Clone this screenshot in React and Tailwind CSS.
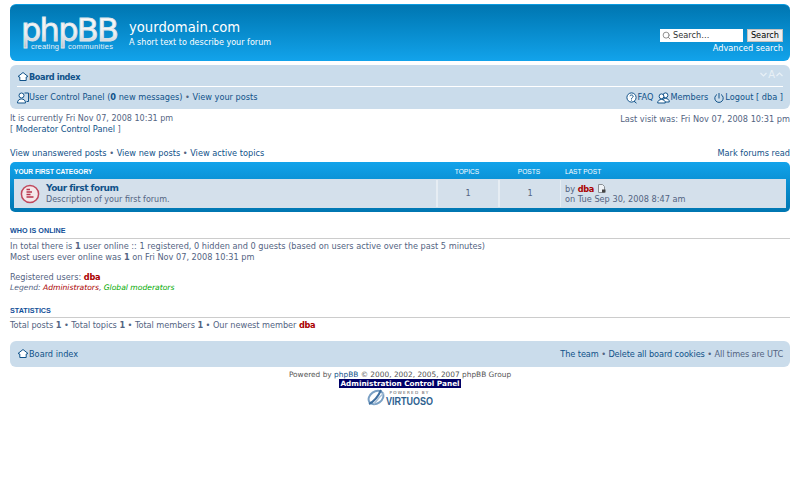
import { Search } from "lucide-react";

const HomeIcon = () => (
  <svg width="12" height="12" viewBox="0 0 12 12" fill="none" stroke="#105289" strokeWidth="1" className="shrink-0">
    <path d="M6 1.5 L11 5.5 L9.2 6 L9.2 9.5 L2.8 9.5 L2.8 6 L1 5.5 Z" fill="#fff" />
  </svg>
);

const UcpIcon = () => (
  <svg width="12" height="12" viewBox="0 0 12 12" fill="none" stroke="#105289" strokeWidth="1" className="shrink-0">
    <circle cx="4.5" cy="3.5" r="2.5" fill="#fff" />
    <path d="M0.5 11 C0.5 8 2.5 7 4.5 7 C6.5 7 8.5 8 8.5 11 Z" fill="#fff" />
    <path d="M7.5 1 H11.5 V9.5 H9.5" />
  </svg>
);

const FaqIcon = () => (
  <svg width="11" height="12" viewBox="0 0 11 12" fill="none" stroke="#105289" strokeWidth="1" className="shrink-0">
    <circle cx="5.5" cy="5.5" r="4.6" fill="#fff" />
    <path d="M3.9 4.2 C3.9 2.6 7.2 2.6 7.2 4.3 C7.2 5.5 5.5 5.4 5.5 6.8" />
    <path d="M5.5 7.6 V8.6" />
    <path d="M8 9.2 L10.5 11.2" />
  </svg>
);

const MembersIcon = () => (
  <svg width="13" height="12" viewBox="0 0 13 12" fill="none" stroke="#105289" strokeWidth="1" className="shrink-0">
    <circle cx="8.5" cy="3.3" r="2.4" fill="#fff" />
    <path d="M5 10 C5 7.5 6.5 6.5 8.5 6.5 C10.5 6.5 12.3 7.5 12.3 10 Z" fill="#fff" />
    <circle cx="4.5" cy="4.3" r="2.4" fill="#fff" />
    <path d="M0.7 11 C0.7 8.5 2.5 7.5 4.5 7.5 C6.5 7.5 8.3 8.5 8.3 11 Z" fill="#fff" />
  </svg>
);

const LogoutIcon = () => (
  <svg width="10" height="12" viewBox="0 0 10 12" fill="none" stroke="#105289" strokeWidth="1" className="shrink-0">
    <path d="M3 2.5 A4.2 4.2 0 1 0 7 2.5" />
    <path d="M5 1 V6.5" />
  </svg>
);

const ForumIcon = () => (
  <svg width="20" height="20" viewBox="0 0 20 20" className="shrink-0">
    <circle cx="10" cy="10" r="8.6" fill="#f5e8ea" stroke="#c0485c" strokeWidth="1.5" />
    <path d="M6.5 5.5 H10 M6.5 8 H12 M6.5 10.5 H10.5 M6.5 13 H13.5" stroke="#b8354c" strokeWidth="1.3" />
  </svg>
);

const PostIcon = () => (
  <svg width="9" height="9" viewBox="0 0 9 9" className="inline-block align-[-1px]">
    <path d="M1.5 0.5 H5.5 L7.5 2.5 V8.5 H1.5 Z" fill="#eef2f6" stroke="#8a8f94" strokeWidth="1" />
    <path d="M5 5.5 H8.5 V8.5 H5 Z" fill="#444" />
  </svg>
);

const VirtuosoLogo = () => (
  <svg width="18" height="17" viewBox="0 0 18 17" className="shrink-0">
    <ellipse cx="9" cy="8.5" rx="8" ry="6" fill="none" stroke="#7aa0c4" strokeWidth="2" transform="rotate(-35 9 8.5)" />
    <path d="M2 15 C6 13 11 8 14 1" fill="none" stroke="#3f6f9f" strokeWidth="2" />
    <path d="M7 15 C9 12 12 8 17 4" fill="none" stroke="#a8c0d8" strokeWidth="1.5" />
  </svg>
);

const PhpbbLogo = () => (
  <svg width="100" height="55" viewBox="0 0 100 55" className="shrink-0">
    <defs>
      <linearGradient id="logoFill" x1="0" y1="0" x2="0" y2="1">
        <stop offset="0" stopColor="#ffffff" />
        <stop offset="0.6" stopColor="#eef1f3" />
        <stop offset="1" stopColor="#aebbc5" />
      </linearGradient>
    </defs>
    <text
      x="0"
      y="36"
      fontFamily="DejaVu Sans, sans-serif"
      fontSize="32"
      textLength="98"
      lengthAdjust="spacing"
      fill="url(#logoFill)"
      stroke="#dfe5ea"
      strokeWidth="0.9"
    >
      phpBB
    </text>
    <text x="10" y="44" fontFamily="Liberation Sans, sans-serif" fontSize="7.5" textLength="28" fill="#e8f2f8">
      creating
    </text>
    <text x="47" y="44" fontFamily="Liberation Sans, sans-serif" fontSize="7.5" textLength="45" fill="#e8f2f8">
      communities
    </text>
  </svg>
);

const FontSizer = () => (
  <div className="flex items-center gap-[1px] text-[#e8f0f6] -mt-[5px]">
    <svg width="7" height="5" viewBox="0 0 7 5" fill="none" stroke="#e8f0f6" strokeWidth="1.2">
      <path d="M0.5 1 L3.5 4 L6.5 1" />
    </svg>
    <span className="text-[10px] leading-[10px]">A</span>
    <svg width="7" height="5" viewBox="0 0 7 5" fill="none" stroke="#e8f0f6" strokeWidth="1.2">
      <path d="M0.5 4 L3.5 1 L6.5 4" />
    </svg>
  </div>
);

const Bullet = () => <span className="text-[#536482]"> • </span>;

const App = () => {
  return (
    <div className="w-[800px] h-[500px] overflow-hidden bg-white px-[10px] pt-[4px] font-['DejaVu_Sans',sans-serif] text-[8.2px] leading-[11px] text-[#536482]">
      {/* header */}
      <div className="h-[57px] rounded-[6px] bg-gradient-to-b from-[#0076b1] to-[#12a3eb] border-t border-[#0a9be0] flex justify-between pl-[11px] pr-[7px] text-white">
        <div className="flex">
          <PhpbbLogo />
          <div className="ml-[8px] pt-[14px]">
            <div className="text-[13.2px] leading-[17px]">yourdomain.com</div>
            <div className="text-[8.07px] leading-[11px] mt-[1px]">A short text to describe your forum</div>
          </div>
        </div>
        <div className="flex flex-col items-end pt-[24px]">
          <div className="flex gap-[4px] h-[13px]">
            <div className="w-[83px] bg-white flex items-center pl-[2px] gap-[2px] text-[#333]">
              <Search size={9} color="#8a8a8a" strokeWidth={2.5} />
              <span>Search…</span>
            </div>
            <div className="w-[36px] bg-[#efefef] border border-[#c7c3bf] flex items-center justify-center text-black">Search</div>
          </div>
          <div className="mt-[1px] leading-[11px]">Advanced search</div>
        </div>
      </div>

      {/* nav */}
      <div className="mt-[4px] h-[44px] rounded-[6px] bg-[#cadceb] px-[7px] text-[#105289]">
        <div className="h-[22px] border-b border-white flex items-center justify-between pt-[3px]">
          <div className="flex items-center">
            <HomeIcon />
            <span className="font-bold tracking-[-0.4px]">Board index</span>
          </div>
          <FontSizer />
        </div>
        <div className="h-[21px] flex items-center justify-between">
          <div className="flex items-center">
            <UcpIcon />
            <span className="whitespace-pre">
              User Control Panel (<b>0</b> new messages)<Bullet />View your posts
            </span>
          </div>
          <div className="flex items-center">
            <FaqIcon />
            <span className="ml-[1px]">FAQ</span>
            <span className="ml-[4px]"><MembersIcon /></span>
            <span>Members</span>
            <span className="ml-[6px]"><LogoutIcon /></span>
            <span className="ml-[1px]">Logout [ dba ]</span>
          </div>
        </div>
      </div>

      {/* time */}
      <div className="mt-[5px] flex justify-between">
        <div>
          <div className="leading-[10px] text-[8.05px]">It is currently Fri Nov 07, 2008 10:31 pm</div>
          <div className="leading-[10px]">[ <span className="text-[#105289]">Moderator Control Panel</span> ]</div>
        </div>
        <div className="leading-[10px]">Last visit was: Fri Nov 07, 2008 10:31 pm</div>
      </div>

      <div className="mt-[14px] flex justify-between text-[#105289] leading-[11px]">
        <div className="whitespace-pre">
          View unanswered posts<Bullet />View new posts<Bullet />View active topics
        </div>
        <div>Mark forums read</div>
      </div>

      {/* forum list */}
      <div className="mt-[3px] h-[50px] rounded-[5px] bg-gradient-to-b from-[#12a3eb] to-[#0076b1] px-[4px]">
        <div className="h-[17px] flex items-center text-white text-[6.6px] font-['Liberation_Sans',sans-serif] pt-[1px]">
          <div className="flex-1 font-bold uppercase">Your first category</div>
          <div className="w-[62px] text-center uppercase">Topics</div>
          <div className="w-[62px] text-center uppercase">Posts</div>
          <div className="w-[226px] pl-[5px] uppercase">Last post</div>
        </div>
        <div className="h-[29px] bg-[#d4e0eb] flex items-center">
          <div className="flex-1 flex items-center pl-[6px] h-full">
            <ForumIcon />
            <div className="ml-[6px]">
              <div className="text-[9px] leading-[11px] font-bold tracking-[-0.5px] text-[#105289]">Your first forum</div>
              <div className="leading-[11px] text-[8px]">Description of your first forum.</div>
            </div>
          </div>
          <div className="w-[62px] h-[27px] border-l-2 border-[#e6edf3] flex items-center justify-center">1</div>
          <div className="w-[62px] h-[27px] border-l-2 border-[#e6edf3] flex items-center justify-center">1</div>
          <div className="w-[226px] h-[27px] border-l border-[#e6edf3] pl-[4px] flex flex-col justify-center">
            <div className="leading-[10px]">by <b className="text-[#aa0000] tracking-[-0.3px]">dba</b> <PostIcon /></div>
            <div className="leading-[10px]">on Tue Sep 30, 2008 8:47 am</div>
          </div>
        </div>
      </div>

      {/* who is online */}
      <div className="mt-[14px] h-[13px] border-b border-[#cccccc] font-['Liberation_Sans',sans-serif] font-bold text-[7.2px] leading-[10px] text-[#115098]">
        WHO IS ONLINE
      </div>
      <div className="mt-[2px] leading-[10.5px]">
        <div>In total there is <b>1</b> user online :: 1 registered, 0 hidden and 0 guests (based on users active over the past 5 minutes)</div>
        <div>Most users ever online was <b>1</b> on Fri Nov 07, 2008 10:31 pm</div>
        <div className="mt-[10px]">Registered users: <b className="text-[#aa0000] tracking-[-0.3px]">dba</b></div>
        <div className="italic text-[7.6px]">
          Legend: <span className="text-[#aa0000]">Administrators</span>, <span className="text-[#00aa00]">Global moderators</span>
        </div>
      </div>

      {/* statistics */}
      <div className="mt-[13px] h-[12px] border-b border-[#cccccc] font-['Liberation_Sans',sans-serif] font-bold text-[7.2px] leading-[10px] text-[#115098]">
        STATISTICS
      </div>
      <div className="mt-[2px] whitespace-pre leading-[11px] tracking-[-0.05px]">
        Total posts <b>1</b><Bullet />Total topics <b>1</b><Bullet />Total members <b>1</b><Bullet />Our newest member <b className="text-[#aa0000] tracking-[-0.3px]">dba</b>
      </div>

      {/* bottom nav */}
      <div className="mt-[10px] h-[26px] rounded-[6px] bg-[#cadceb] px-[7px] flex items-center justify-between text-[#105289]">
        <div className="flex items-center">
          <HomeIcon />
          <span>Board index</span>
        </div>
        <div className="whitespace-pre tracking-[-0.1px]">
          The team<Bullet />Delete all board cookies<Bullet /><span className="text-[#536482]">All times are UTC</span>
        </div>
      </div>

      {/* copyright */}
      <div className="mt-[3px] flex flex-col items-center text-[7.4px] leading-[10px] text-[#555555]">
        <div>Powered by <span className="text-[#105289]">phpBB</span> © 2000, 2002, 2005, 2007 phpBB Group</div>
        <div className="-mt-[1px] bg-[#000066] text-white font-bold text-[7.3px] leading-[9px] px-[1px]">Administration Control Panel</div>
        <div className="flex items-center mt-[1px] gap-[1px]">
          <VirtuosoLogo />
          <div className="flex flex-col items-center">
            <span className="text-[4.2px] leading-[6px] tracking-[1.2px] text-[#555]">POWERED BY</span>
            <span className="text-[9px] leading-[10px] text-[#2e5f8f] font-['Liberation_Sans',sans-serif] font-bold scale-y-125">VIRTUOSO</span>
          </div>
        </div>
      </div>
    </div>
  );
};

export default App;
